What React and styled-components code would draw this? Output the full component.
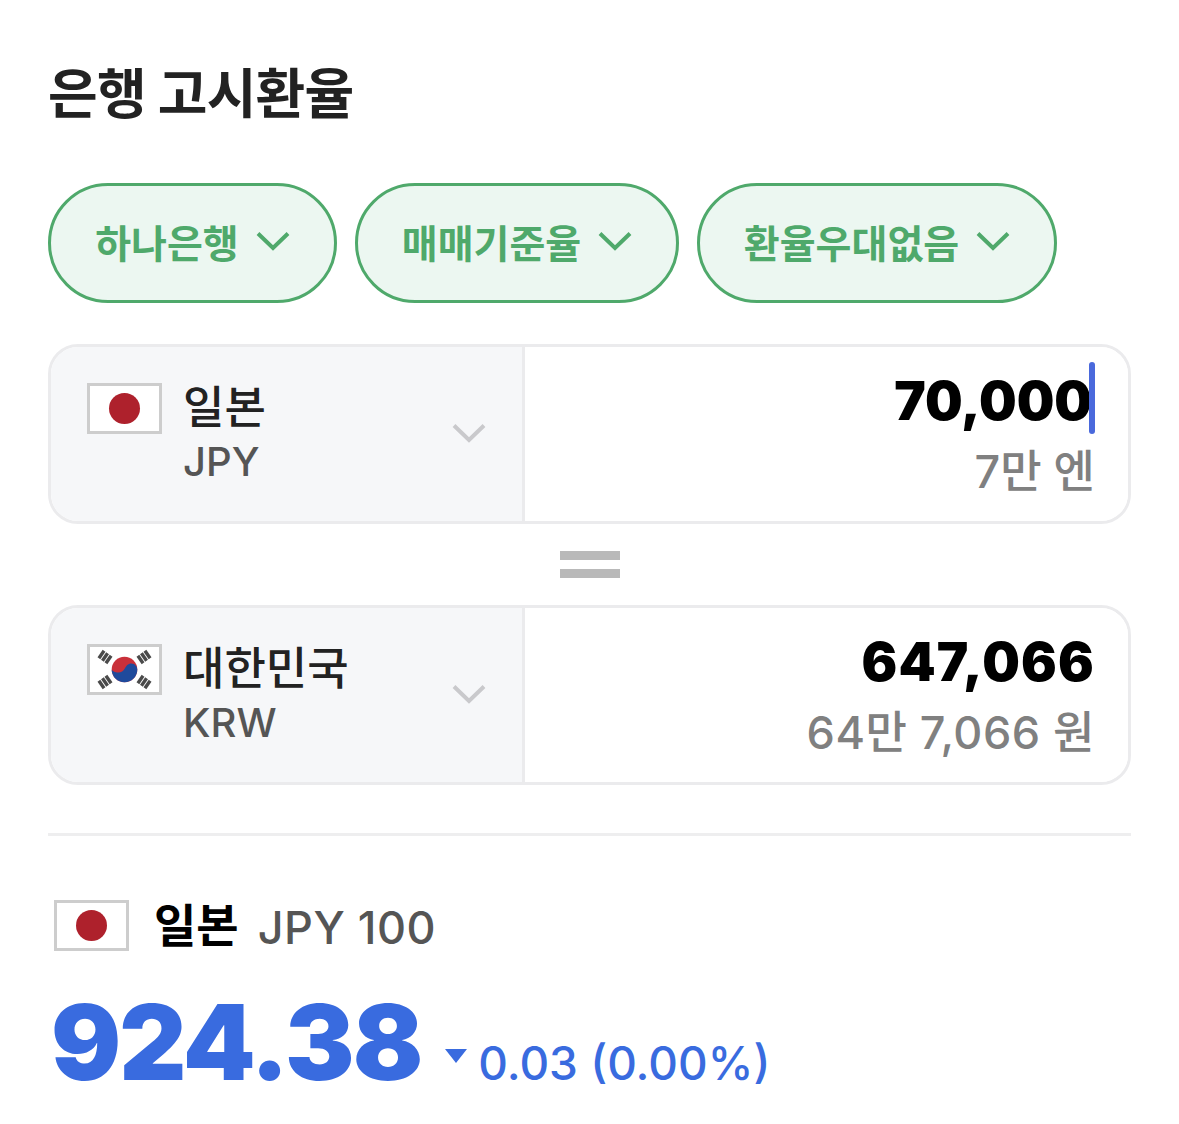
import React from "react";
import styled, { createGlobalStyle } from "styled-components";

const GlobalStyle = createGlobalStyle`
  html, body {
    margin: 0;
    padding: 0;
    background: #fff;
  }
  body {
    font-family: Inter, "Noto Sans CJK KR", sans-serif;
  }
`;

const Page = styled.div`
  width: 1179px;
  height: 1124px;
  box-sizing: border-box;
  padding: 60px 48px 0;
  overflow: hidden;
`;

const Title = styled.h1`
  margin: 0;
  height: 70px;
  font-size: 54px;
  line-height: 70px;
  font-weight: 700;
  color: #222;
  letter-spacing: -0.8px;
`;

const Chips = styled.div`
  display: flex;
  gap: 18px;
  margin-top: 53px;
`;

const Chip = styled.button`
  display: flex;
  align-items: center;
  justify-content: center;
  gap: 17px;
  width: ${(p) => p.$w}px;
  height: 120px;
  padding: 0 0 5px;
  box-sizing: border-box;
  border: 3px solid #4fa96b;
  border-radius: 60px;
  background: #ecf7f1;
  color: #4fa96b;
  font-family: inherit;
  font-size: 39px;
  font-weight: 700;
`;

const Card = styled.div`
  display: flex;
  height: 180px;
  box-sizing: border-box;
  border: 3px solid #ebebed;
  border-radius: 30px;
  overflow: hidden;
  margin-top: ${(p) => p.$top}px;
`;

const Picker = styled.div`
  display: flex;
  width: 474px;
  box-sizing: border-box;
  padding: 36px 36px 0;
  background: #f6f7f9;
  border-right: 3px solid #ebebed;
`;

const Flag = styled.div`
  flex: none;
  width: 75px;
  height: 51px;
  box-sizing: border-box;
  border: 3px solid #cdcdcd;
  background: #fff;
  display: flex;
  align-items: center;
  justify-content: center;
`;

const Names = styled.div`
  display: flex;
  flex-direction: column;
  margin-left: 21px;
  flex: 1;
`;

const Name = styled.div`
  font-size: 45px;
  line-height: 54px;
  font-weight: 500;
  color: #222;
  margin-top: -2px;
`;

const Code = styled.div`
  font-size: 40px;
  line-height: 54px;
  font-weight: 500;
  color: #555;
`;

const PickerChevron = styled.div`
  display: flex;
  align-items: center;
  height: 100px;
`;

const Values = styled.div`
  flex: 1;
  display: flex;
  flex-direction: column;
  align-items: flex-end;
  padding: 20px 33px 0 0;
  background: #fff;
`;

const Amount = styled.div`
  position: relative;
  font-size: 53px;
  line-height: 68px;
  font-weight: 900;
  color: #000;
  letter-spacing: ${(p) => (p.$wide ? "1.2px" : "0")};
  margin-right: ${(p) => (p.$wide ? "0" : "3px")};
`;

const Caret = styled.span`
  position: absolute;
  right: -3px;
  top: -5px;
  width: 6px;
  height: 72px;
  border-radius: 3px;
  background: #4a69dc;
`;

const Spoken = styled.div`
  margin-top: 6px;
  font-size: 45px;
  line-height: 62px;
  font-weight: 500;
  color: #808080;
  letter-spacing: ${(p) => (p.$wide ? "0.5px" : "0")};
`;

const EqualRow = styled.div`
  display: flex;
  flex-direction: column;
  align-items: center;
  gap: 9px;
  margin-top: 27px;
`;

const EqualBar = styled.span`
  width: 60px;
  height: 9px;
  background: #b9b9b9;
`;

const Divider = styled.hr`
  margin: 48px 0 0;
  border: 0;
  height: 3px;
  background: #eeeeef;
`;

const RateHead = styled.div`
  display: flex;
  align-items: center;
  margin: 61px 0 0 6px;
`;

const RateName = styled.span`
  margin-left: 25px;
  font-size: 46px;
  line-height: 56px;
  font-weight: 700;
  color: #000;
`;

const RateCode = styled.span`
  margin-left: 19px;
  padding-top: 6px;
  font-size: 45px;
  line-height: 50px;
  font-weight: 500;
  color: #555;
  letter-spacing: 0.5px;
`;

const RateRow = styled.div`
  display: flex;
  align-items: baseline;
  margin: 26px 0 0 3px;
  color: #396bdf;
`;

const RateValue = styled.span`
  font-size: 104px;
  line-height: 126px;
  font-weight: 900;
  letter-spacing: -2px;
`;

const DeltaMark = styled.span`
  align-self: center;
  display: flex;
  margin: 28px 11px 0 24px;
`;

const Delta = styled.span`
  font-size: 46px;
  font-weight: 500;
`;

const Chevron = ({ color }) => (
  <svg width="34" height="20" viewBox="0 0 34 20" fill="none">
    <path d="M2 2.5 17 17 32 2.5" stroke={color} strokeWidth="4" />
  </svg>
);

const JapanFlag = () => (
  <svg width="69" height="45" viewBox="0 0 69 45">
    <circle cx="34.5" cy="22.5" r="15.5" fill="#ae212c" />
  </svg>
);

const Trigram = ({ x, y, angle }) => (
  <g transform={`translate(${x} ${y}) rotate(${angle})`} fill="#4a4a4a">
    <rect x="-4.500" y="-6" width="9" height="3.400" />
    <rect x="-4.500" y="-1.700" width="9" height="3.400" />
    <rect x="-4.500" y="2.600" width="9" height="3.400" />
  </g>
);

const KoreaFlag = () => (
  <svg width="69" height="45" viewBox="0 0 69 45">
    <Trigram x={15} y={10} angle={-55} />
    <Trigram x={54} y={10} angle={55} />
    <Trigram x={15} y={35} angle={55} />
    <Trigram x={54} y={35} angle={-55} />
    <circle cx="34.5" cy="22.5" r="12.8" fill="#c9303a" />
    <path
      d="M21.7 22.500a12.8 12.8 0 0 0 25.600 0c0-3-2.500-6-6-6s-5 2.500-6.500 5-3.500 4-6.500 4-6.600-1.500-6.600-3z"
      fill="#1f4a9c"
    />
  </svg>
);

function Converter({ top, flag, name, code, amount, caret, spoken, wide }) {
  return (
    <Card $top={top}>
      <Picker>
        <Flag>{flag}</Flag>
        <Names>
          <Name>{name}</Name>
          <Code>{code}</Code>
        </Names>
        <PickerChevron>
          <Chevron color="#c9c9cc" />
        </PickerChevron>
      </Picker>
      <Values>
        <Amount $wide={wide}>
          {amount}
          {caret && <Caret />}
        </Amount>
        <Spoken $wide={wide}>{spoken}</Spoken>
      </Values>
    </Card>
  );
}

export default function App() {
  return (
    <Page>
      <GlobalStyle />
      <Title>은행 고시환율</Title>
      <Chips>
        <Chip $w={289}>
          하나은행
          <Chevron color="#4fa96b" />
        </Chip>
        <Chip $w={324}>
          매매기준율
          <Chevron color="#4fa96b" />
        </Chip>
        <Chip $w={360}>
          환율우대없음
          <Chevron color="#4fa96b" />
        </Chip>
      </Chips>
      <Converter
        top={41}
        flag={<JapanFlag />}
        name="일본"
        code="JPY"
        amount="70,000"
        caret
        spoken="7만 엔"
      />
      <EqualRow>
        <EqualBar />
        <EqualBar />
      </EqualRow>
      <Converter
        top={27}
        flag={<KoreaFlag />}
        name="대한민국"
        code="KRW"
        amount="647,066"
        spoken="64만 7,066 원"
        wide
      />
      <Divider />
      <RateHead>
        <Flag>
          <JapanFlag />
        </Flag>
        <RateName>일본</RateName>
        <RateCode>JPY 100</RateCode>
      </RateHead>
      <RateRow>
        <RateValue>924.38</RateValue>
        <DeltaMark>
          <svg width="22" height="14" viewBox="0 0 22 14">
            <path d="M0 0h22L11 14z" fill="#396bdf" />
          </svg>
        </DeltaMark>
        <Delta>0.03 (0.00%)</Delta>
      </RateRow>
    </Page>
  );
}
